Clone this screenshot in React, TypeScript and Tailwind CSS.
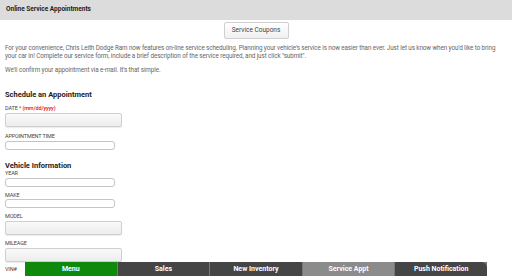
import React from 'react';

// ============================================================================
// Form bits
// ============================================================================

function Label({ children }: { children: React.ReactNode }) {
  return (
    <div className="text-[5.5px] leading-[7px] uppercase text-[#444] tracking-tight">{children}</div>
  );
}

function SmallInput() {
  return <div className="w-[110px] h-[9px] border border-[#c4c4c4] rounded-[3px] bg-white" />;
}

function BigInput() {
  return (
    <div className="w-[117px] h-[14px] border border-[#cfcfcf] rounded-[2px] bg-gradient-to-b from-[#f9f9f9] to-[#ededed] shadow-[0_1px_1px_rgba(0,0,0,0.08)]" />
  );
}

const tabs = [
  { label: 'Menu', cls: 'bg-[#0e890c]' },
  { label: 'Sales', cls: 'bg-[#454545]' },
  { label: 'New Inventory', cls: 'bg-[#454545]' },
  { label: 'Service Appt', cls: 'bg-[#8b8b8b]' },
  { label: 'Push Notification', cls: 'bg-[#454545] rounded-tr-[6px]' },
];

export default function App() {
  return (
    <div className="w-[512px] h-[276px] overflow-hidden bg-white font-['Roboto',sans-serif] relative">
      {/* Header */}
      <div className="h-[20px] bg-[#dcdcdc] flex items-center px-[6px]">
        <span className="text-[6.5px] font-bold text-[#222]">Online Service Appointments</span>
      </div>

      {/* Coupons */}
      <div className="flex justify-center pt-[2px]">
        <div className="w-[65px] h-[17px] border border-[#cfcfcf] rounded-[2px] bg-gradient-to-b from-white to-[#f0f0f0] flex items-center justify-center text-[6.5px] text-[#444]">
          Service Coupons
        </div>
      </div>

      {/* Intro */}
      <div className="px-[5px] pt-[5px] text-[6.3px] leading-[8px] text-[#666] tracking-[-0.09px]">
        <p>
          For your convenience, Chris Leith Dodge Ram now features on-line service scheduling. Planning your vehicle's service is now easier than ever. Just let us know when you'd like to bring your car in! Complete our service form, include a brief description of the service required, and just click "submit".
        </p>
        <p className="mt-[6px]">We'll confirm your appointment via e-mail. It's that simple.</p>
      </div>

      {/* Schedule */}
      <div className="px-[5px]">
        <div className="mt-[16px] text-[7.5px] font-bold text-[#222] leading-[10px]">Schedule an Appointment</div>
        <div className="mt-[5px]">
          <Label>
            Date <span className="text-[#e01010] normal-case font-medium">* (mm/dd/yyyy)</span>
          </Label>
        </div>
        <div className="mt-[1px]"><BigInput /></div>
        <div className="mt-[6px]"><Label>Appointment Time</Label></div>
        <div className="mt-[1px]"><SmallInput /></div>

        <div className="mt-[11px] text-[7.5px] font-bold text-[#222] leading-[9px]">Vehicle Information</div>
        <Label>Year</Label>
        <div className="mt-[1px]"><SmallInput /></div>
        <div className="mt-[5px]"><Label>Make</Label></div>
        <div className="mt-[0px]"><SmallInput /></div>
        <div className="mt-[5px]"><Label>Model</Label></div>
        <div className="mt-[1px]"><BigInput /></div>
        <div className="mt-[5px]"><Label>Mileage</Label></div>
        <div className="mt-[1px]"><BigInput /></div>
        <div className="mt-[4px]"><Label>VIN#</Label></div>
      </div>

      {/* Bottom nav */}
      <div className="absolute left-[25px] bottom-0 w-[462px] h-[14px] flex gap-[1px] bg-[#777]">
        {tabs.map((t) => (
          <div
            key={t.label}
            className={`flex-1 flex items-center justify-center text-[7px] font-bold text-white ${t.cls}`}
          >
            {t.label}
          </div>
        ))}
      </div>
    </div>
  );
}
